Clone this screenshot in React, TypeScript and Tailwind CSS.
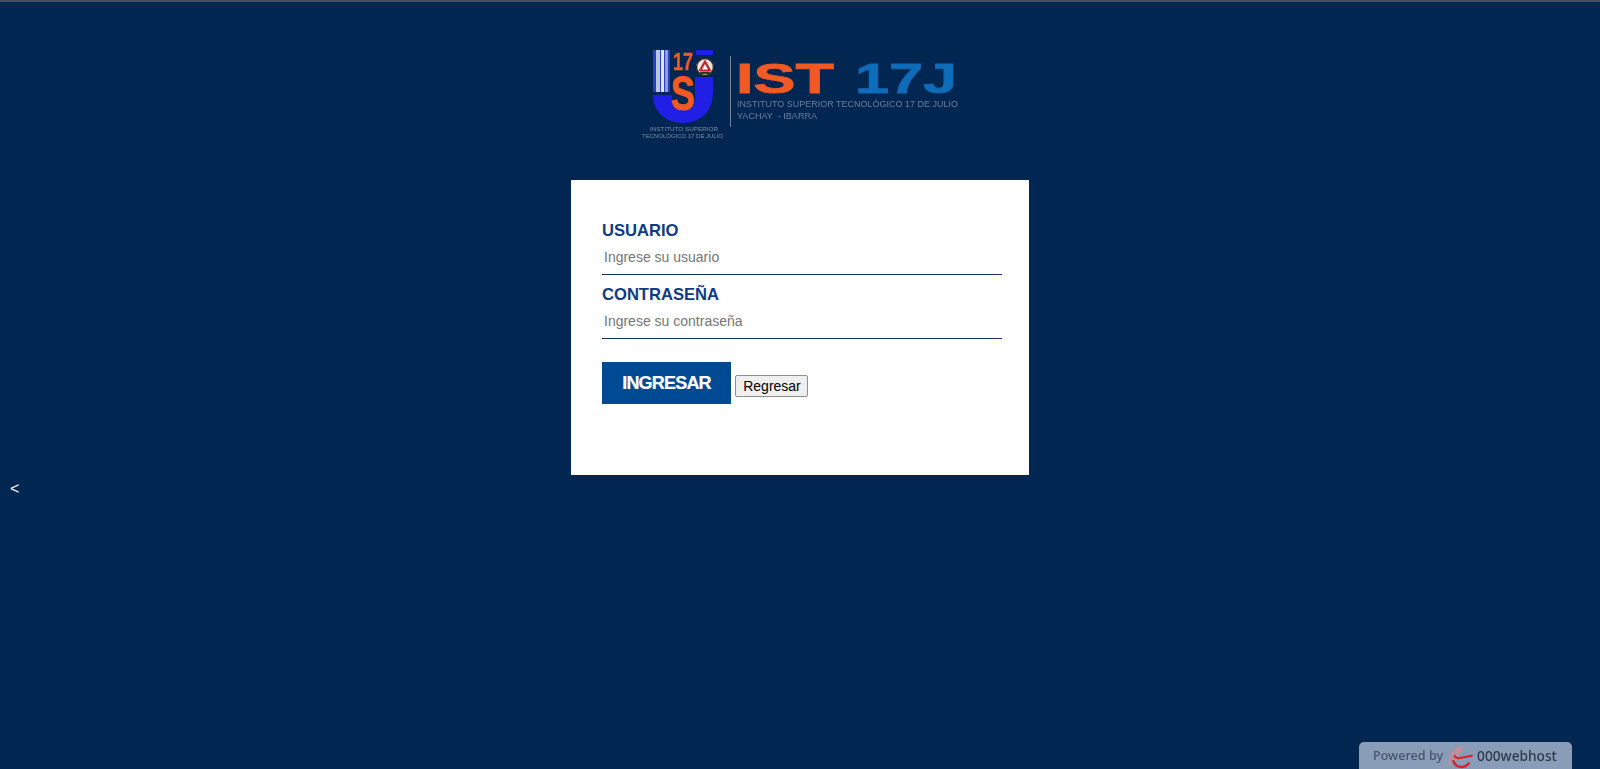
function Logo() {
    return (
        <svg width="360" height="120" viewBox="0 0 360 120" className="block mx-auto blur-[0.5px]">
            {/* stripes */}
            <rect x="33" y="20" width="17" height="42" fill="#2a3fc0" />
            <rect x="36" y="20" width="4" height="42" fill="#b9c6de" />
            <rect x="41" y="20" width="3" height="42" fill="#dfe6f1" />
            <rect x="45" y="20" width="3" height="42" fill="#8ea2c6" />
            {/* J */}
            <path
                d="M33 65 H52 V67 C52 78 60 80 66 80 C72 80 75 75 75 66 V47 H93 V62 C93 82 80 93 63 93 C46 93 33 82 33 65 Z"
                fill="#1f1fe6"
            />
            <rect x="76" y="20" width="17" height="5" fill="#1f1fe6" />
            <text x="53" y="40" fontFamily="'Liberation Sans', sans-serif" fontWeight="700" fontSize="23" fill="#f15a22" stroke="#f15a22" strokeWidth="0.4" textLength="20" lengthAdjust="spacingAndGlyphs">17</text>
            <text x="51" y="80" fontFamily="'Liberation Sans', sans-serif" fontWeight="700" fontSize="49" fill="#f15a22" stroke="#f15a22" strokeWidth="1" textLength="24" lengthAdjust="spacingAndGlyphs">S</text>
            {/* emblem */}
            <circle cx="85" cy="37" r="9" fill="#e8e4dc" />
            <circle cx="85" cy="37" r="8.5" fill="none" stroke="#222" strokeWidth="1.4" />
            <path d="M85 29.5 L91.5 41 H78.5 Z" fill="#c8202a" />
            <path d="M85 34 L88 39.5 H82 Z" fill="#fff" />
            <rect x="80" y="41.5" width="10" height="2.5" fill="#333" />
            {/* caption under the mark */}
            <text x="30" y="101" fontFamily="'Liberation Sans', sans-serif" fontSize="6" fill="#7f8ea6" textLength="68" lengthAdjust="spacingAndGlyphs">INSTITUTO SUPERIOR</text>
            <text x="22" y="108" fontFamily="'Liberation Sans', sans-serif" fontSize="6" fill="#7f8ea6" textLength="81" lengthAdjust="spacingAndGlyphs">TECNOLÓGICO 17 DE JULIO</text>
            {/* separator */}
            <rect x="110" y="26" width="1" height="71" fill="#6f819c" />
            {/* wordmark */}
            <text x="116" y="63" fontFamily="'Liberation Sans', sans-serif" fontWeight="700" fontSize="43" fill="#f15a22" stroke="#f15a22" strokeWidth="0.8" textLength="98" lengthAdjust="spacingAndGlyphs">IST</text>
            <text x="235" y="63" fontFamily="'Liberation Sans', sans-serif" fontWeight="700" fontSize="43" fill="#0f6cb8" stroke="#0f6cb8" strokeWidth="0.8" textLength="102" lengthAdjust="spacingAndGlyphs">17J</text>
            <text x="117" y="77" fontFamily="'Liberation Sans', sans-serif" fontSize="9.5" fill="#6f7f99" textLength="221" lengthAdjust="spacingAndGlyphs">INSTITUTO SUPERIOR TECNOLÓGICO 17 DE JULIO</text>
            <text x="117" y="89" fontFamily="'Liberation Sans', sans-serif" fontSize="9.5" fill="#6f7f99" textLength="80" xmlSpace="preserve" lengthAdjust="spacingAndGlyphs">YACHAY  - IBARRA</text>
        </svg>
    );
}

function Field({ label, placeholder, type }: { label: string; placeholder: string; type: string }) {
    return (
        <div>
            <label className="block text-[16.6px] leading-[19px] font-bold text-[#0f3a84]">{label}</label>
            <input
                type={type}
                placeholder={placeholder}
                className="block w-full h-[35px] px-[2px] text-[14px] border-b-[1.5px] border-[#1b2f66] bg-white outline-none placeholder:text-[#757575]"
            />
        </div>
    );
}

export default function App() {
    return (
        <div className="relative min-h-[769px] bg-[#002651] font-['Liberation_Sans',Arial,sans-serif] overflow-hidden">
            <div className="h-[2px] bg-[#4a4f55]" />

            <div className="pt-[28px]">
                <Logo />
            </div>

            <div className="w-[458px] h-[295px] mx-auto mt-[30px] bg-white pt-[41px] pl-[31px] pr-[27px]">
                <div className="flex flex-col gap-[10px]">
                    <Field label="USUARIO" placeholder="Ingrese su usuario" type="text" />
                    <Field label="CONTRASEÑA" placeholder="Ingrese su contraseña" type="password" />
                </div>

                <div className="flex items-center gap-[4px] mt-[23px]">
                    <button className="w-[129px] h-[42px] bg-[#004a94] text-white text-[18px] font-bold tracking-[-0.8px] [-webkit-text-stroke:0.2px_white]">
                        INGRESAR
                    </button>
                    <button className="w-[73px] h-[22px] mt-[5px] pl-[1px] bg-[#efefef] border border-[#8f8f8f] rounded-[2px] text-[14px] leading-none text-black">
                        Regresar
                    </button>
                </div>
            </div>

            <div className="pl-[10px] mt-[5px] text-[16px] leading-[18px] text-white">&lt;</div>

            {/* hosting badge */}
            <div className="absolute right-[28px] bottom-0 w-[213px] h-[27px] flex items-center pt-[2px] pl-[14px] bg-[#8a9db8] rounded-t-[5px] blur-[0.5px]">
                <span className="text-[12.6px] text-[#46546a] font-medium font-['Noto_Sans',sans-serif]">Powered by</span>
                <svg width="28" height="26" viewBox="0 0 26 24" fill="none" strokeLinecap="round" className="ml-[3px] mr-[3px] shrink-0">
                    <path d="M3 19 C3 11 8 5 14 3" stroke="#e8848a" strokeWidth="1.6" />
                    <path d="M7 15 C8 10 11 7 15 6" stroke="#e8848a" strokeWidth="1.4" />
                    <path d="M8 11 C10 15 15 12 24 11" stroke="#d6262e" strokeWidth="2" />
                    <path d="M7 16 C9 22 17 23 21 18" stroke="#d6262e" strokeWidth="2.4" />
                </svg>
                <span className="text-[13.7px] text-[#2d3a4a] font-medium font-['Noto_Sans',sans-serif]">000webhost</span>
            </div>
        </div>
    );
}
